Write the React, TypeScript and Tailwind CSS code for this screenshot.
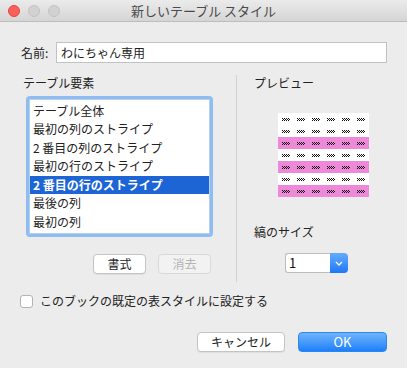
import React from "react";

const font = { fontFamily: '"Noto Sans CJK JP", "Noto Sans", sans-serif' };

const items = [
  "テーブル全体",
  "最初の列のストライプ",
  "2 番目の列のストライプ",
  "最初の行のストライプ",
  "2 番目の行のストライプ",
  "最後の列",
  "最初の列",
];

const stripes = [false, false, true, false, true, false, true];

function Glyph() {
  // tiny checkered chevron like the preview cell text
  const dots: [number, number][] = [
    [0, 0], [2, 0], [4, 0], [6, 0],
    [1, 1], [3, 1], [5, 1], [7, 1],
    [0, 2], [2, 2], [4, 2], [6, 2],
  ];
  return (
    <svg width="8" height="3" viewBox="0 0 8 3" className="block">
      {dots.map(([x, y], i) => (
        <rect key={i} x={x} y={y} width="1" height="1" fill="#111" />
      ))}
    </svg>
  );
}

function Preview() {
  return (
    <div className="w-[91px] flex flex-col">
      {stripes.map((pink, r) => (
        <div
          key={r}
          className={`h-[12px] flex items-center pl-[4px] gap-[7px] ${pink ? "bg-[#ee88d8]" : "bg-white"}`}
        >
          {[0, 1, 2, 3, 4, 5].map((c) => (
            <Glyph key={c} />
          ))}
        </div>
      ))}
    </div>
  );
}

function Light({ color, border }: { color: string; border: string }) {
  return (
    <div
      className="w-[12px] h-[12px] rounded-full border"
      style={{ background: color, borderColor: border }}
    />
  );
}

export default function App() {
  return (
    <div className="w-[407px] h-[368px] bg-[#ececec] text-[12px] text-[#222] overflow-hidden" style={font}>
      <div className="relative h-[22px] bg-gradient-to-b from-[#ebebeb] to-[#d5d5d5] border-b border-[#bdbdbd] flex items-center">
        <div className="flex gap-[8px] pl-[8px]">
          <Light color="#fc5f57" border="#df4744" />
          <Light color="#d2d2d2" border="#c2c2c2" />
          <Light color="#d2d2d2" border="#c2c2c2" />
        </div>
        <div className="absolute inset-x-0 top-0 h-[21px] flex items-center justify-center text-[13px] text-[#4a4a4a]">
          新しいテーブル スタイル
        </div>
      </div>

      <div className="flex items-center mt-[20px] pl-[21px]">
        <span className="w-[35px]">名前:</span>
        <div className="w-[331px] h-[21px] bg-white border border-[#c2c2c2] flex items-center pl-[4px] text-[12px]">
          わにちゃん専用
        </div>
      </div>

      <div className="flex mt-[12px] pl-[20px]">
        <div className="w-[216px] flex flex-col">
          <div className="h-[15px] leading-[15px] pl-[3px]">テーブル要素</div>
          <div className="ml-[6px] mt-[6px] w-[187px] h-[141px] border-[3px] border-[#8fbdf1] rounded-[4px]">
            <div className="h-full border border-[#b5cfee] bg-white pt-[1.5px]">
              {items.map((t, i) => (
                <div
                  key={t}
                  className={`h-[18.5px] leading-[18.5px] pl-[3px] ${i === 4 ? "bg-[#1d65d5] text-white font-bold" : ""}`}
                >
                  {t}
                </div>
              ))}
            </div>
          </div>
          <div className="flex gap-[12px] ml-[73px] mt-[17px]">
            <div className="w-[53px] h-[20px] bg-white border border-[#c4c4c4] rounded-[4px] shadow-[0_1px_0_rgba(0,0,0,0.06)] flex items-center justify-center">
              書式
            </div>
            <div className="w-[53px] h-[20px] bg-[#f2f2f2] border border-[#d8d8d8] rounded-[4px] flex items-center justify-center text-[#b4b4b4]">
              消去
            </div>
          </div>
          <div className="h-[8px]" />
        </div>
        <div className="w-px bg-[#d2d2d2]" />
        <div className="flex flex-col pl-[17px]">
          <div className="h-[15px] leading-[15px]">プレビュー</div>
          <div className="ml-[24px] mt-[23px]">
            <Preview />
          </div>
          <div className="h-[15px] leading-[15px] mt-[27px]">縞のサイズ</div>
          <div className="ml-[31px] mt-[14px] w-[63px] h-[20px] flex">
            <div className="flex-1 bg-white border border-[#bdbdbd] border-r-0 rounded-l-[3px] flex items-center pl-[3px] text-[13px] text-[#111]">
              1
            </div>
            <div className="w-[18px] rounded-r-[4px] bg-gradient-to-b from-[#63abfb] to-[#1b78f5] flex items-center justify-center">
              <svg width="8" height="5" viewBox="0 0 8 5">
                <path d="M1 1 L4 4 L7 1" stroke="white" strokeWidth="1.4" fill="none" />
              </svg>
            </div>
          </div>
        </div>
      </div>

      <div className="flex items-center mt-[10px] pl-[20px]">
        <div className="w-[13px] h-[13px] bg-white border border-[#b4b4b4] rounded-[3px]" />
        <span className="ml-[7px]">このブックの既定の表スタイルに設定する</span>
      </div>

      <div className="flex justify-end gap-[13px] pr-[20px] mt-[22px]">
        <div className="w-[88px] h-[20px] bg-white border border-[#c4c4c4] rounded-[4px] shadow-[0_1px_0_rgba(0,0,0,0.06)] flex items-center justify-center">
          キャンセル
        </div>
        <div className="w-[89px] h-[20px] rounded-[4px] bg-gradient-to-b from-[#6db4fa] to-[#1a7ffa] border border-[#2a86f5] flex items-center justify-center text-white text-[13px]">
          OK
        </div>
      </div>
    </div>
  );
}
